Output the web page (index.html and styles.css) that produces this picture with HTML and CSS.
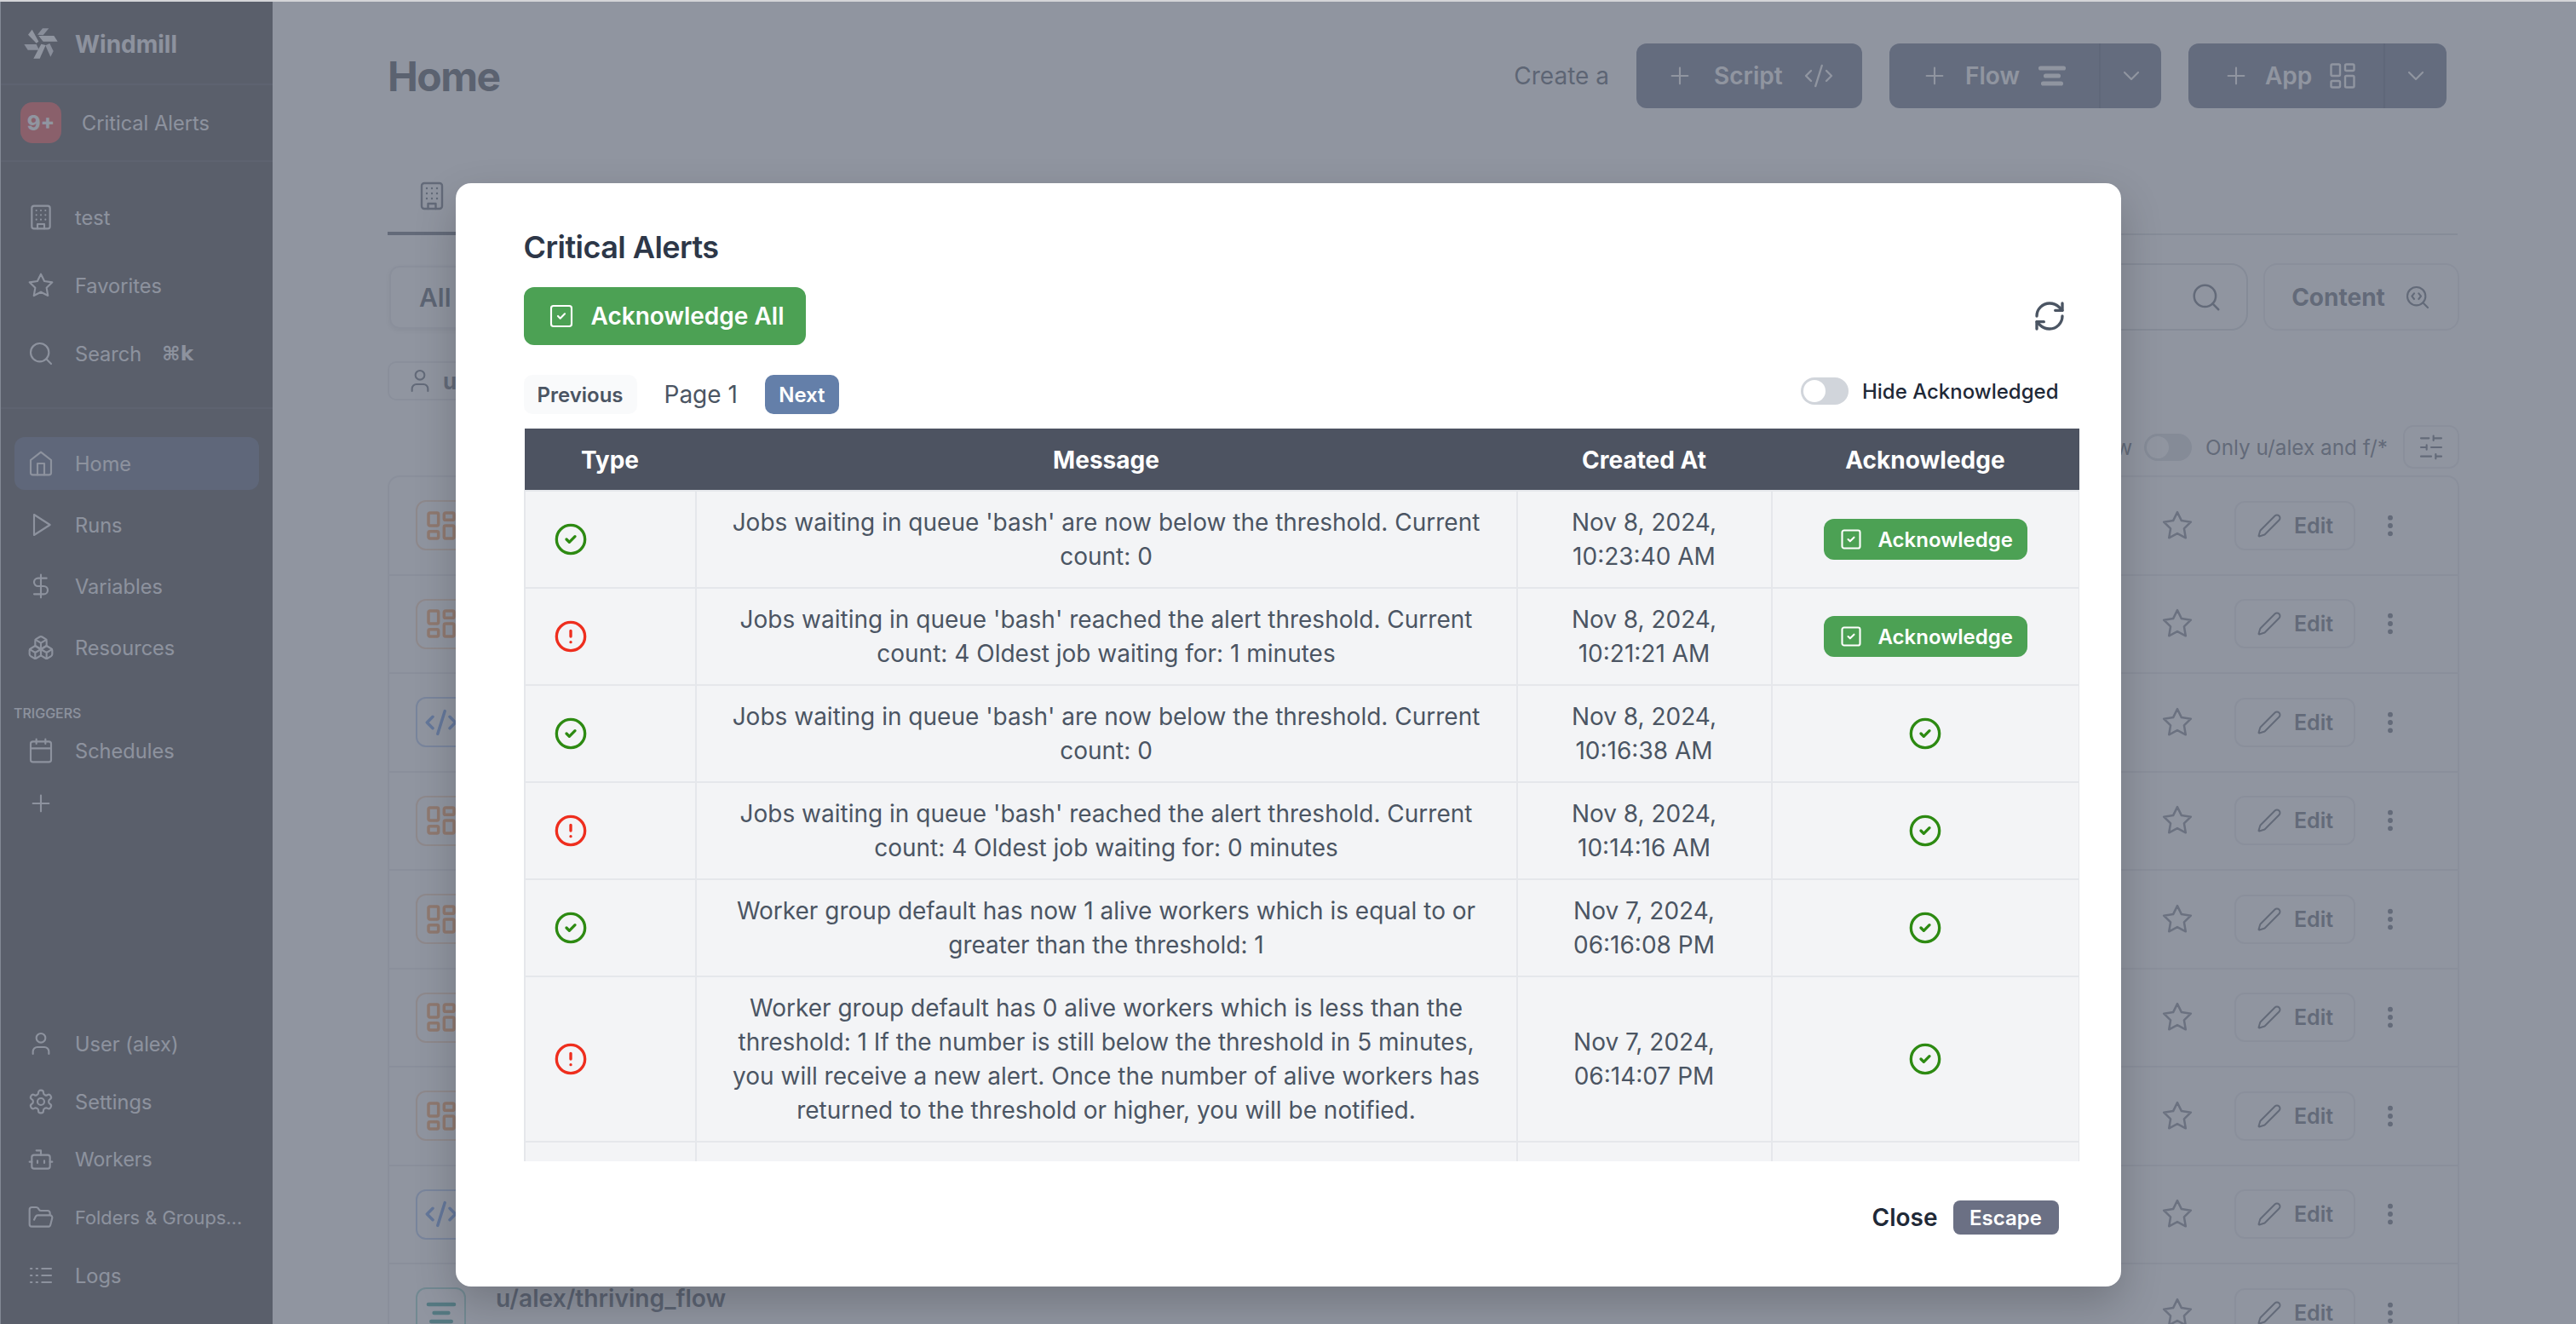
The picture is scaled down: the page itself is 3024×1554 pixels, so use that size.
FILE: index.html
```html
<!DOCTYPE html>
<html lang="en">
<head>
<meta charset="utf-8">
<title>Windmill - Critical Alerts</title>
<link rel="stylesheet" href="styles.css">
</head>
<body>
<svg class="defs" aria-hidden="true">
  <symbol id="i-building" viewBox="0 0 24 24"><rect x="4" y="2" width="16" height="20" rx="2"/><path d="M9 22v-4h6v4M8 6h.01M16 6h.01M12 6h.01M12 10h.01M12 14h.01M16 10h.01M16 14h.01M8 10h.01M8 14h.01"/></symbol>
  <symbol id="i-star" viewBox="0 0 24 24"><polygon points="12 2 15.09 8.26 22 9.27 17 14.14 18.18 21.02 12 17.77 5.82 21.02 7 14.14 2 9.27 8.91 8.26 12 2"/></symbol>
  <symbol id="i-search" viewBox="0 0 24 24"><circle cx="11" cy="11" r="8"/><path d="m21 21-4.3-4.3"/></symbol>
  <symbol id="i-home" viewBox="0 0 24 24"><path d="M3 9l9-7 9 7v11a2 2 0 0 1-2 2H5a2 2 0 0 1-2-2z"/><path d="M9 22V12h6v10"/></symbol>
  <symbol id="i-play" viewBox="0 0 24 24"><polygon points="6 3 20 12 6 21 6 3"/></symbol>
  <symbol id="i-dollar" viewBox="0 0 24 24"><path d="M12 2v20M17 5H9.5a3.5 3.5 0 0 0 0 7h5a3.5 3.5 0 0 1 0 7H6"/></symbol>
  <symbol id="i-boxes" viewBox="0 0 24 24"><path d="M2.97 12.92A2 2 0 0 0 2 14.63v3.24a2 2 0 0 0 .97 1.71l3 1.8a2 2 0 0 0 2.06 0L12 19v-5.5l-5-3-4.03 2.42Z"/><path d="m7 16.5-4.74-2.85M7 16.5l5-3M7 16.5v5.17"/><path d="M12 13.5V19l3.97 2.38a2 2 0 0 0 2.06 0l3-1.8a2 2 0 0 0 .97-1.71v-3.24a2 2 0 0 0-.97-1.71L17 10.5l-5 3Z"/><path d="m17 16.5-5-3M17 16.5l4.74-2.85M17 16.5v5.17"/><path d="M7.97 4.42A2 2 0 0 0 7 6.13v4.37l5 3 5-3V6.13a2 2 0 0 0-.97-1.71l-3-1.8a2 2 0 0 0-2.06 0l-3 1.8Z"/><path d="M12 8 7.26 5.15M12 8l4.74-2.85M12 13.5V8"/></symbol>
  <symbol id="i-calendar" viewBox="0 0 24 24"><rect x="3" y="4" width="18" height="18" rx="2"/><path d="M16 2v4M8 2v4M3 10h18"/></symbol>
  <symbol id="i-plus" viewBox="0 0 24 24"><path d="M5 12h14M12 5v14"/></symbol>
  <symbol id="i-user" viewBox="0 0 24 24"><path d="M19 21v-2a4 4 0 0 0-4-4H9a4 4 0 0 0-4 4v2"/><circle cx="12" cy="7" r="4"/></symbol>
  <symbol id="i-settings" viewBox="0 0 24 24"><path d="M12.22 2h-.44a2 2 0 0 0-2 2v.18a2 2 0 0 1-1 1.73l-.43.25a2 2 0 0 1-2 0l-.15-.08a2 2 0 0 0-2.73.73l-.22.38a2 2 0 0 0 .73 2.73l.15.1a2 2 0 0 1 1 1.72v.51a2 2 0 0 1-1 1.74l-.15.09a2 2 0 0 0-.73 2.73l.22.38a2 2 0 0 0 2.73.73l.15-.08a2 2 0 0 1 2 0l.43.25a2 2 0 0 1 1 1.73V20a2 2 0 0 0 2 2h.44a2 2 0 0 0 2-2v-.18a2 2 0 0 1 1-1.73l.43-.25a2 2 0 0 1 2 0l.15.08a2 2 0 0 0 2.73-.73l.22-.39a2 2 0 0 0-.73-2.73l-.15-.08a2 2 0 0 1-1-1.74v-.5a2 2 0 0 1 1-1.74l.15-.09a2 2 0 0 0 .73-2.73l-.22-.38a2 2 0 0 0-2.73-.73l-.15.08a2 2 0 0 1-2 0l-.43-.25a2 2 0 0 1-1-1.73V4a2 2 0 0 0-2-2z"/><circle cx="12" cy="12" r="3"/></symbol>
  <symbol id="i-bot" viewBox="0 0 24 24"><path d="M12 8V4H8"/><rect x="4" y="8" width="16" height="12" rx="2"/><path d="M2 14h2M20 14h2M15 13v2M9 13v2"/></symbol>
  <symbol id="i-folder" viewBox="0 0 24 24"><path d="m6 14 1.45-2.9A2 2 0 0 1 9.24 10H20a2 2 0 0 1 1.94 2.5l-1.55 6a2 2 0 0 1-1.94 1.5H4a2 2 0 0 1-2-2V5c0-1.1.9-2 2-2h3.93a2 2 0 0 1 1.66.9l.82 1.2a2 2 0 0 0 1.66.9H18a2 2 0 0 1 2 2v2"/></symbol>
  <symbol id="i-logs" viewBox="0 0 24 24"><path d="M13 12h8M13 18h8M13 6h8M3 12h1M3 18h1M3 6h1M8 12h1M8 18h1M8 6h1"/></symbol>
  <symbol id="i-code" viewBox="0 0 24 24"><path d="m18 16 4-4-4-4M6 8l-4 4 4 4M14.5 4l-5 16"/></symbol>
  <symbol id="i-app" viewBox="0 0 24 24"><rect x="3" y="3" width="7" height="9" rx="1"/><rect x="14" y="3" width="7" height="5" rx="1"/><rect x="14" y="12" width="7" height="9" rx="1"/><rect x="3" y="16" width="7" height="5" rx="1"/></symbol>
  <symbol id="i-flow" viewBox="0 0 24 24"><path d="M21 6H3M17 12H7M19 18H5"/></symbol>
  <symbol id="i-chevron" viewBox="0 0 24 24"><path d="m6 9 6 6 6-6"/></symbol>
  <symbol id="i-squarecheck" viewBox="0 0 24 24"><rect x="3" y="3" width="18" height="18" rx="2"/><path d="m9 12 2 2 4-4"/></symbol>
  <symbol id="i-refresh" viewBox="0 0 24 24"><path d="M3 12a9 9 0 0 1 9-9 9.75 9.75 0 0 1 6.74 2.74L21 8"/><path d="M21 3v5h-5"/><path d="M21 12a9 9 0 0 1-9 9 9.75 9.75 0 0 1-6.74-2.74L3 16"/><path d="M8 16H3v5"/></symbol>
  <symbol id="i-ok" viewBox="0 0 24 24"><circle cx="12" cy="12" r="10"/><path d="m9 12 2 2 4-4"/></symbol>
  <symbol id="i-alert" viewBox="0 0 24 24"><circle cx="12" cy="12" r="10"/><path d="M12 8v4M12 16h.01"/></symbol>
  <symbol id="i-pen" viewBox="0 0 24 24"><path d="M21.174 6.812a1 1 0 0 0-3.986-3.987L3.842 16.174a2 2 0 0 0-.5.83l-1.321 4.352a.5.5 0 0 0 .623.622l4.353-1.32a2 2 0 0 0 .83-.497z"/></symbol>
  <symbol id="i-more" viewBox="0 0 24 24"><circle cx="12" cy="5" r="1"/><circle cx="12" cy="12" r="1"/><circle cx="12" cy="19" r="1"/></symbol>
  <symbol id="i-sliders" viewBox="0 0 24 24"><path d="M21 4h-7M10 4H3M21 12h-9M8 12H3M21 20h-5M12 20H3M14 2v4M8 10v4M16 18v4"/></symbol>
  <symbol id="i-searchcode" viewBox="0 0 24 24"><path d="m13 13.5 2-2.5-2-2.5M21 21l-4.3-4.3M9 8.5 7 11l2 2.5"/><circle cx="11" cy="11" r="8"/></symbol>
</svg>

<div class="topline"></div>
<div class="app">
  <aside class="sidebar">
    <div class="brand">
      <svg class="logo" viewBox="0 0 210 180" aria-hidden="true">
        <polygon points="39,62 53,44 76,86 68,92"/>
        <polygon class="soft" points="72,62 90,40 112,40 92,64"/>
        <polygon points="76,66 130,66 143,86 92,86"/>
        <polygon class="soft" points="100,100 115,93 128,120 118,140"/>
        <polygon points="85,95 101,99 80,146 58,146"/>
        <polygon class="soft" points="25,96 68,96 78,116 38,116"/>
      </svg>
      <span>Windmill</span>
    </div>
    <div class="alerts"><span class="badge">9+</span><span>Critical Alerts</span></div>
    <nav class="nav-top">
      <div class="nav-tall"><svg class="ic"><use href="#i-building"/></svg><span>test</span></div>
      <div class="nav-tall"><svg class="ic"><use href="#i-star"/></svg><span>Favorites</span></div>
      <div class="nav-tall"><svg class="ic"><use href="#i-search"/></svg><span>Search</span><kbd class="cmdk">⌘k</kbd></div>
    </nav>
    <nav class="nav-main">
      <div class="nav-item active"><svg class="ic"><use href="#i-home"/></svg><span>Home</span></div>
      <div class="nav-item"><svg class="ic"><use href="#i-play"/></svg><span>Runs</span></div>
      <div class="nav-item"><svg class="ic"><use href="#i-dollar"/></svg><span>Variables</span></div>
      <div class="nav-item"><svg class="ic"><use href="#i-boxes"/></svg><span>Resources</span></div>
      <div class="nav-label">TRIGGERS</div>
      <div class="nav-item flush"><svg class="ic"><use href="#i-calendar"/></svg><span>Schedules</span></div>
      <div class="nav-item flush"><svg class="ic"><use href="#i-plus"/></svg></div>
    </nav>
    <nav class="nav-bottom">
      <div class="nav-low"><svg class="ic"><use href="#i-user"/></svg><span>User (alex)</span></div>
      <div class="nav-low"><svg class="ic"><use href="#i-settings"/></svg><span>Settings</span></div>
      <div class="nav-low"><svg class="ic"><use href="#i-bot"/></svg><span class="workers">Workers</span></div>
      <div class="nav-low"><svg class="ic"><use href="#i-folder"/></svg><span class="folders">Folders &amp; Groups...</span></div>
      <div class="nav-low"><svg class="ic"><use href="#i-logs"/></svg><span>Logs</span></div>
    </nav>
  </aside>

  <main class="main">
    <header class="head">
      <h1>Home</h1>
      <div class="creates">
        <span class="create-label">Create a</span>
        <div class="create script"><div class="create-main"><svg class="ic"><use href="#i-plus"/></svg><b>Script</b><svg class="ic big"><use href="#i-code"/></svg></div></div>
        <div class="create flow"><div class="create-main"><svg class="ic"><use href="#i-plus"/></svg><b>Flow</b><svg class="ic big thick"><use href="#i-flow"/></svg></div><div class="create-more"><svg class="ic"><use href="#i-chevron"/></svg></div></div>
        <div class="create appb"><div class="create-main"><svg class="ic"><use href="#i-plus"/></svg><b>App</b><svg class="ic big"><use href="#i-app"/></svg></div><div class="create-more"><svg class="ic"><use href="#i-chevron"/></svg></div></div>
      </div>
    </header>
    <div class="tabs"><div class="tab"><svg class="ic"><use href="#i-building"/></svg></div></div>
    <div class="filters">
      <div class="kinds"><b>All</b></div>
      <div class="finders">
        <div class="searchbox"><svg class="ic"><use href="#i-search"/></svg></div>
        <div class="contentbtn"><b>Content</b><svg class="ic"><use href="#i-searchcode"/></svg></div>
      </div>
    </div>
    <div class="chips"><div class="chip"><svg class="ic"><use href="#i-user"/></svg><b>u/alex</b></div></div>
    <div class="tools">
      <span class="tool-w">Tree view</span>
      <span class="switch dim"></span>
      <span class="only">Only u/alex and f/*</span>
      <span class="toolbtn"><svg class="ic"><use href="#i-sliders"/></svg></span>
    </div>
    <div class="list">
      <div class="row"><span class="kind k-app"><svg class="ic"><use href="#i-app"/></svg></span><div class="actions"><svg class="ic star"><use href="#i-star"/></svg><span class="edit"><svg class="ic"><use href="#i-pen"/></svg><b>Edit</b></span><svg class="ic more"><use href="#i-more"/></svg></div></div>
      <div class="row"><span class="kind k-app"><svg class="ic"><use href="#i-app"/></svg></span><div class="actions"><svg class="ic star"><use href="#i-star"/></svg><span class="edit"><svg class="ic"><use href="#i-pen"/></svg><b>Edit</b></span><svg class="ic more"><use href="#i-more"/></svg></div></div>
      <div class="row"><span class="kind k-code"><svg class="ic"><use href="#i-code"/></svg></span><div class="actions"><svg class="ic star"><use href="#i-star"/></svg><span class="edit"><svg class="ic"><use href="#i-pen"/></svg><b>Edit</b></span><svg class="ic more"><use href="#i-more"/></svg></div></div>
      <div class="row"><span class="kind k-app"><svg class="ic"><use href="#i-app"/></svg></span><div class="actions"><svg class="ic star"><use href="#i-star"/></svg><span class="edit"><svg class="ic"><use href="#i-pen"/></svg><b>Edit</b></span><svg class="ic more"><use href="#i-more"/></svg></div></div>
      <div class="row"><span class="kind k-app"><svg class="ic"><use href="#i-app"/></svg></span><div class="actions"><svg class="ic star"><use href="#i-star"/></svg><span class="edit"><svg class="ic"><use href="#i-pen"/></svg><b>Edit</b></span><svg class="ic more"><use href="#i-more"/></svg></div></div>
      <div class="row"><span class="kind k-app"><svg class="ic"><use href="#i-app"/></svg></span><div class="actions"><svg class="ic star"><use href="#i-star"/></svg><span class="edit"><svg class="ic"><use href="#i-pen"/></svg><b>Edit</b></span><svg class="ic more"><use href="#i-more"/></svg></div></div>
      <div class="row"><span class="kind k-app"><svg class="ic"><use href="#i-app"/></svg></span><div class="actions"><svg class="ic star"><use href="#i-star"/></svg><span class="edit"><svg class="ic"><use href="#i-pen"/></svg><b>Edit</b></span><svg class="ic more"><use href="#i-more"/></svg></div></div>
      <div class="row"><span class="kind k-code"><svg class="ic"><use href="#i-code"/></svg></span><div class="actions"><svg class="ic star"><use href="#i-star"/></svg><span class="edit"><svg class="ic"><use href="#i-pen"/></svg><b>Edit</b></span><svg class="ic more"><use href="#i-more"/></svg></div></div>
      <div class="row"><span class="kind k-flow"><svg class="ic thick"><use href="#i-flow"/></svg></span><div class="row-text"><b>u/alex/thriving_flow</b><span>u/alex/thriving_flow</span></div><div class="actions"><svg class="ic star"><use href="#i-star"/></svg><span class="edit"><svg class="ic"><use href="#i-pen"/></svg><b>Edit</b></span><svg class="ic more"><use href="#i-more"/></svg></div></div>
    </div>
  </main>
</div>

<div class="overlay">
  <section class="modal">
    <h2>Critical Alerts</h2>
    <div class="modal-actions">
      <button class="ack-all"><svg class="ic"><use href="#i-squarecheck"/></svg>Acknowledge All</button>
      <svg class="ic refresh"><use href="#i-refresh"/></svg>
    </div>
    <div class="pager-row">
      <div class="pager">
        <button class="prev">Previous</button>
        <span class="page">Page 1</span>
        <button class="next">Next</button>
      </div>
      <label class="hide"><span class="switch"></span>Hide Acknowledged</label>
    </div>
    <div class="table-wrap">
      <table>
        <colgroup><col class="c1"><col class="c2"><col class="c3"><col class="c4"></colgroup>
        <thead><tr><th class="th-type">Type</th><th>Message</th><th>Created At</th><th>Acknowledge</th></tr></thead>
        <tbody>
          <tr><td class="type"><svg class="st ok"><use href="#i-ok"/></svg></td><td>Jobs waiting in queue 'bash' are now below the threshold. Current count: 0</td><td class="when">Nov 8, 2024, 10:23:40 AM</td><td><button class="ack"><svg class="ic"><use href="#i-squarecheck"/></svg>Acknowledge</button></td></tr>
          <tr><td class="type"><svg class="st bad"><use href="#i-alert"/></svg></td><td>Jobs waiting in queue 'bash' reached the alert threshold. Current count: 4 Oldest job waiting for: 1 minutes</td><td class="when">Nov 8, 2024, 10:21:21 AM</td><td><button class="ack"><svg class="ic"><use href="#i-squarecheck"/></svg>Acknowledge</button></td></tr>
          <tr><td class="type"><svg class="st ok"><use href="#i-ok"/></svg></td><td>Jobs waiting in queue 'bash' are now below the threshold. Current count: 0</td><td class="when">Nov 8, 2024, 10:16:38 AM</td><td><svg class="st ok"><use href="#i-ok"/></svg></td></tr>
          <tr><td class="type"><svg class="st bad"><use href="#i-alert"/></svg></td><td>Jobs waiting in queue 'bash' reached the alert threshold. Current count: 4 Oldest job waiting for: 0 minutes</td><td class="when">Nov 8, 2024, 10:14:16 AM</td><td><svg class="st ok"><use href="#i-ok"/></svg></td></tr>
          <tr><td class="type"><svg class="st ok"><use href="#i-ok"/></svg></td><td>Worker group default has now 1 alive workers which is equal to or greater than the threshold: 1</td><td class="when">Nov 7, 2024, 06:16:08 PM</td><td><svg class="st ok"><use href="#i-ok"/></svg></td></tr>
          <tr><td class="type"><svg class="st bad"><use href="#i-alert"/></svg></td><td>Worker group default has 0 alive workers which is less than the threshold: 1 If the number is still below the threshold in 5 minutes, you will receive a new alert. Once the number of alive workers has returned to the threshold or higher, you will be notified.</td><td class="when">Nov 7, 2024, 06:14:07 PM</td><td><svg class="st ok"><use href="#i-ok"/></svg></td></tr>
          <tr class="blank"><td></td><td></td><td></td><td></td></tr>
        </tbody>
      </table>
    </div>
    <footer class="modal-foot"><b>Close</b><kbd>Escape</kbd></footer>
  </section>
</div>
</body>
</html>
```

FILE: styles.css
```css
* { box-sizing: border-box; }
html, body { margin: 0; height: 100%; overflow: hidden; }
body { font-family: Inter, "Liberation Sans", sans-serif; background: #fff; color: #2e3440; display: flex; flex-direction: column; position: relative; }
.defs { width: 0; height: 0; position: absolute; }
.topline { height: 2px; background: #d4d5d8; flex: none; }
.ic { width: 32px; height: 32px; fill: none; stroke: currentColor; stroke-width: 1.6; stroke-linecap: round; stroke-linejoin: round; flex: none; display: block; }
b { font-weight: 600; }

.app { flex: 1; display: flex; min-height: 0; border-left: 1px solid #c8cad0; }

/* Sidebar */
.sidebar { width: 319px; flex: none; background: #28282e; color: #f3f4f6; display: flex; flex-direction: column; font-size: 23.6px; }
.brand { height: 98px; flex: none; display: flex; align-items: center; padding-left: 19px; border-bottom: 2px solid #383a42; font-size: 28px; font-weight: 700; }
.brand span { margin-top: 4px; }
.logo { width: 70px; height: 60px; fill: #fff; flex: none; margin-right: -2px; }
.logo .soft { fill: #e2e3e8; }
.alerts { height: 90px; flex: none; display: flex; align-items: center; gap: 24px; padding-left: 23px; border-bottom: 2px solid #383a42; }
.alerts span:last-child { margin-top: 1px; }
.badge { width: 48px; height: 48px; border-radius: 14px; background: #e62e2e; display: flex; align-items: center; justify-content: center; font-size: 24px; font-weight: 800; color: #fff; }
.nav-top { flex: none; padding: 25px 0 23px; border-bottom: 2px solid #383a42; }
.nav-tall { height: 80px; display: flex; align-items: center; gap: 24px; padding-left: 31px; }
.cmdk { font-family: "DejaVu Sans", Inter, sans-serif; font-weight: 700; font-size: 23px; margin-left: 0; }
.nav-main { flex: none; padding: 33px 16px 0; }
.nav-item { height: 62px; margin-bottom: 10px; display: flex; align-items: center; gap: 24px; padding-left: 15px; border-radius: 12px; }
.nav-item.flush { margin-bottom: 0; }
.nav-item.active { background: #3c4a68; }
.nav-label { font-size: 16px; line-height: 24px; margin: 34px 0 1px -1px; font-weight: 500; }
.nav-bottom { margin-top: auto; padding-bottom: 23px; }
.nav-low { height: 68px; display: flex; align-items: center; gap: 24px; padding-left: 31px; }
.workers { font-size: 23px; }
.folders { font-size: 21.8px; }

/* Page behind the dialog */
.main { flex: 1; min-width: 0; padding: 0 137px 0 135px; }
.head { margin-top: 49px; height: 76px; display: flex; align-items: center; justify-content: space-between; }
h1 { margin: 0; font-size: 48px; font-weight: 700; color: #2e3440; letter-spacing: -1.5px; }
.creates { display: flex; align-items: center; gap: 32px; margin-right: 15px; }
.create-label { font-size: 28px; margin-right: 0; color: #374151; }
.create { height: 76px; display: flex; background: #4f5b78; color: #fff; border-radius: 12px; font-size: 28px; }
.create-main { display: flex; align-items: center; gap: 20px; }
.script { width: 265px; }
.script .create-main { padding-left: 35px; gap: 24px; }
.flow { width: 319px; }
.flow .create-main { width: 246px; padding-left: 37px; }
.appb { width: 303px; }
.appb .create-main { width: 229px; padding-left: 40px; gap: 18px; }
.big { width: 36px; height: 36px; }
.thick { stroke-width: 3.4; }
.create-more { flex: 1; display: flex; align-items: center; justify-content: center; border-left: 2px solid #3f4a64; }
.tabs { margin-top: 63px; height: 86px; border-bottom: 2px solid #d8dbe0; margin-right: 2px; }
.tab { width: 420px; height: 86px; border-bottom: 4px solid #4b5563; padding: 22px 0 0 34px; color: #4b5563; }
.tab .ic { width: 36px; height: 36px; }
.filters { margin-top: 33px; height: 79px; display: flex; justify-content: space-between; align-items: center; }
.kinds { height: 74px; width: 420px; margin-left: 2px; padding-left: 33px; display: flex; align-items: center; border-radius: 12px; border: 2px solid #e5e7eb; box-shadow: 0 2px 6px rgba(0,0,0,.12); font-size: 30px; color: #374151; }
.finders { display: flex; gap: 18px; height: 79px; }
.searchbox { width: 500px; border: 2px solid #d1d5db; border-radius: 20px; display: flex; align-items: center; justify-content: flex-end; padding-right: 28px; color: #4b5563; }
.searchbox .ic { width: 38px; height: 38px; }
.contentbtn { width: 230px; border: 2px solid #e5e7eb; border-radius: 16px; display: flex; align-items: center; justify-content: center; gap: 22px; font-size: 28px; color: #4b5563; }
.contentbtn b { font-weight: 700; }
.chips { margin-top: 36px; height: 46px; }
.chip { width: 400px; height: 46px; border: 2px solid #e5e7eb; border-radius: 10px; display: flex; align-items: center; gap: 11px; padding-left: 20px; color: #4b5563; font-size: 26px; }
.chip b { font-weight: 700; }
.tools { margin-top: 29px; height: 51px; display: flex; align-items: center; justify-content: flex-end; font-size: 24.3px; color: #4b5563; }
.tool-w { margin-right: 14px; }
.only { margin: 0 18px 0 16px; }
.toolbtn { width: 66px; height: 51px; border: 2px solid #e5e7eb; border-radius: 12px; display: flex; align-items: center; justify-content: center; }
.switch { width: 56px; height: 32px; border-radius: 16px; background: #d1d5db; display: block; position: relative; flex: none; }
.switch::after { content: ""; position: absolute; left: 3px; top: 3px; width: 26px; height: 26px; border-radius: 50%; background: #fff; }
.list { margin-top: 8px; border: 2px solid #e5e7eb; border-radius: 14px; }
.row { height: 115.5px; display: flex; align-items: center; padding-left: 31px; border-bottom: 2px solid #e5e7eb; }
.kind { width: 59px; height: 59px; border: 2px solid; border-radius: 12px; display: flex; align-items: center; justify-content: center; flex: none; }
.kind .ic { width: 40px; height: 40px; stroke-width: 2.1; }
.kind .thick { stroke-width: 2.8; }
.k-app { color: #f98f42; border-color: #f8cdb0; }
.k-code { color: #4f86e6; border-color: #a3bfee; }
.k-flow { color: #148f86; border-color: #86d0c8; }
.row-text { margin-left: 35px; display: flex; flex-direction: column; align-self: flex-start; padding-top: 20px; line-height: 40px; font-size: 28.2px; color: #374151; }
.row-text span { font-size: 24px; color: #6b7280; }
.actions { margin-left: auto; display: flex; align-items: center; color: #4b5563; }
.star { width: 38px; height: 38px; stroke: #6b7280; }
.edit { width: 142px; height: 58px; margin-left: 48px; border: 2px solid #e5e7eb; border-radius: 12px; display: flex; align-items: center; justify-content: center; gap: 14px; font-size: 25px; }
.edit .ic { width: 30px; height: 30px; }
.more { margin: 0 63px 0 25px; stroke-width: 2.4; }

/* Dialog */
.overlay { position: absolute; inset: 2px 0 0 0; background: rgba(107,114,128,.75); display: flex; justify-content: center; align-items: flex-start; }
.modal { width: 1955px; height: 1295px; margin-top: 213px; background: #fff; border-radius: 18px; box-shadow: 0 20px 50px rgba(0,0,0,.2); padding: 49px 49px 0 80px; display: flex; flex-direction: column; }
h2 { margin: 0 0 21px; font-size: 36px; line-height: 52px; font-weight: 600; letter-spacing: -.55px; color: #2d3748; }
button { font-family: inherit; border: 0; color: #fff; }
.modal-actions { height: 68px; display: flex; align-items: center; justify-content: space-between; padding-right: 15px; flex: none; }
.ack-all { height: 68px; width: 331px; background: #4ca154; border-radius: 12px; font-size: 28px; font-weight: 600; display: flex; align-items: center; gap: 19px; padding: 0 0 0 28px; white-space: nowrap; }
.refresh { width: 40px; height: 40px; color: #4b5563; stroke-width: 2; }
.pager-row { margin-top: 35px; height: 46px; display: flex; justify-content: space-between; align-items: center; padding-right: 24px; flex: none; }
.pager { display: flex; align-items: center; }
.prev { width: 133px; height: 46px; background: #f9fafb; color: #4b5563; font-size: 24px; font-weight: 600; border-radius: 10px; padding: 0; }
.page { font-size: 28px; color: #4b5563; margin: 0 32px; }
.next { width: 87px; height: 46px; background: #647fa9; font-size: 24px; font-weight: 600; border-radius: 10px; padding: 0; }
.hide { display: flex; align-items: center; gap: 16px; font-size: 24px; font-weight: 500; color: #1f2937; margin-top: -8px; }
.table-wrap { margin-top: 17px; height: 860px; overflow: hidden; flex: none; }
table { width: 1825px; table-layout: fixed; border-collapse: collapse; font-size: 28px; line-height: 40px; color: #4b5563; text-align: center; }
.c1 { width: 201px; } .c2 { width: 964px; } .c3 { width: 299px; } .c4 { width: 361px; }
th { background: #4d5361; color: #fff; font-weight: 700; height: 73px; padding: 2px 16px 0; }
td { background: #f3f4f6; border: 2px solid #e5e7eb; padding: 16px 40px; vertical-align: middle; }
td.when { padding: 16px 24px; }
td .st { margin: 0 auto; }
.type { text-align: left; padding-left: 33px; }
.type .st { margin: 0; }
.st { width: 40px; height: 40px; fill: none; stroke-width: 2; stroke-linecap: round; stroke-linejoin: round; display: block; }
.ok { stroke: #2d8a12; }
.bad { stroke: #ee2e1e; }
.blank td { height: 60px; }
.ack { height: 48px; width: 239px; background: #4ca154; border-radius: 12px; font-size: 24px; font-weight: 600; display: flex; align-items: center; gap: 18px; padding: 0 0 0 18px; margin: 0 auto; white-space: nowrap; }
.ack .ic { width: 28px; height: 28px; stroke-width: 1.8; }
.modal-foot { flex: 1; display: flex; align-items: center; justify-content: flex-end; gap: 18px; padding: 0 24px 15px 0; font-size: 28px; color: #1f2937; }
kbd { font-family: inherit; }
.modal-foot kbd { width: 124px; height: 40px; background: #6b7084; color: #fff; border-radius: 8px; display: flex; align-items: center; justify-content: center; font-size: 24px; font-weight: 600; }
```
